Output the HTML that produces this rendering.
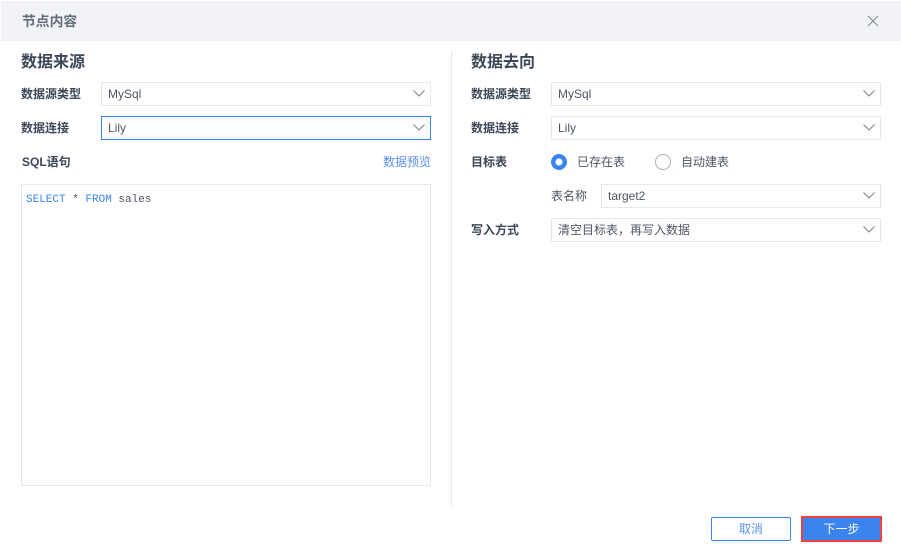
<!DOCTYPE html>
<html lang="zh"><head><meta charset="utf-8"><style>
html,body{margin:0;padding:0;width:901px;height:551px;overflow:hidden;background:#fff}
body{font-family:"Liberation Sans","Noto Sans CJK SC",sans-serif;position:relative;font-size:12px;color:#3d4757}
.a{position:absolute;white-space:nowrap}
.h{font-size:16px;font-weight:bold;line-height:22px;color:#3d4757}
.l{font-size:12px;font-weight:bold;line-height:18px;color:#3d4757}
.s{position:absolute;box-sizing:border-box;height:24px;border:1px solid #e8e8e8;background:#fff;line-height:22px;padding-left:6px;color:#4d5666;font-size:12px;white-space:nowrap}
.s svg{position:absolute;right:5px;top:7px}
</style></head><body>
<div class="a" style="left:1px;top:1px;width:900px;height:40px;background:#f2f3f7"></div>
<div class="a" style="left:22px;top:12px;line-height:20px;font-weight:bold;color:#666e7a;font-size:13.8px">节点内容</div>
<svg class="a" style="left:867px;top:15px" width="12" height="12" viewBox="0 0 12 12"><path d="M1 1L11 11M11 1L1 11" stroke="#7d8590" stroke-width="1" fill="none"/></svg>

<div class="a h" style="left:21px;top:52px">数据来源</div>
<div class="a l" style="left:21px;top:85px">数据源类型</div>
<div class="s" style="left:101px;top:82px;width:330px">MySql<svg width="12" height="7" viewBox="0 0 12 7"><path d="M0.5 0.5L6 6L11.5 0.5" stroke="#8a8078" fill="none"/></svg></div>
<div class="a l" style="left:21px;top:119px">数据连接</div>
<div class="s" style="left:101px;top:116px;width:330px;border-color:#3a84f0">Lily<svg width="12" height="7" viewBox="0 0 12 7"><path d="M0.5 0.5L6 6L11.5 0.5" stroke="#8a8078" fill="none"/></svg></div>
<div class="a l" style="left:22px;top:153px">SQL语句</div>
<div class="a" style="left:383px;top:153px;line-height:18px;color:#5b8ff0">数据预览</div>
<div class="a" style="left:21px;top:184px;width:410px;height:302px;box-sizing:border-box;border:1px solid #e8e8e8"></div>
<div class="a" style="left:26px;top:193px;font-family:'Liberation Mono',monospace;font-size:11px;line-height:15px;color:#4d5666"><span style="color:#3a84f0">SELECT</span> * <span style="color:#3a84f0">FROM</span> sales</div>

<div class="a" style="left:451px;top:51px;width:1px;height:455px;background:#e8e8e8"></div>

<div class="a h" style="left:471px;top:52px">数据去向</div>
<div class="a l" style="left:471px;top:85px">数据源类型</div>
<div class="s" style="left:551px;top:82px;width:330px">MySql<svg width="12" height="7" viewBox="0 0 12 7"><path d="M0.5 0.5L6 6L11.5 0.5" stroke="#8a8078" fill="none"/></svg></div>
<div class="a l" style="left:471px;top:119px">数据连接</div>
<div class="s" style="left:551px;top:116px;width:330px">Lily<svg width="12" height="7" viewBox="0 0 12 7"><path d="M0.5 0.5L6 6L11.5 0.5" stroke="#8a8078" fill="none"/></svg></div>
<div class="a l" style="left:471px;top:153px">目标表</div>
<svg class="a" style="left:551px;top:154px" width="16" height="16" viewBox="0 0 16 16"><circle cx="8" cy="8" r="8" fill="#3a84f0"/><circle cx="8" cy="8" r="3.5" fill="#fff"/></svg>
<div class="a" style="left:577px;top:153px;line-height:18px;color:#4d5666">已存在表</div>
<svg class="a" style="left:655px;top:154px" width="16" height="16" viewBox="0 0 16 16"><circle cx="8" cy="8" r="7.5" fill="#fff" stroke="#a9afba"/></svg>
<div class="a" style="left:681px;top:153px;line-height:18px;color:#4d5666">自动建表</div>
<div class="a" style="left:551px;top:187px;line-height:18px;color:#4d5666">表名称</div>
<div class="s" style="left:601px;top:184px;width:280px">target2<svg width="12" height="7" viewBox="0 0 12 7"><path d="M0.5 0.5L6 6L11.5 0.5" stroke="#8a8078" fill="none"/></svg></div>
<div class="a l" style="left:471px;top:221px">写入方式</div>
<div class="s" style="left:551px;top:218px;width:330px">清空目标表，再写入数据<svg width="12" height="7" viewBox="0 0 12 7"><path d="M0.5 0.5L6 6L11.5 0.5" stroke="#8a8078" fill="none"/></svg></div>

<div class="a" style="left:711px;top:517px;width:80px;height:24px;box-sizing:border-box;border:1px solid #3a84f0;border-radius:2px;text-align:center;line-height:22px;color:#5b8ff0">取消</div>
<div class="a" style="left:801px;top:516px;width:81px;height:26px;box-sizing:border-box;border:2px solid #f04040;background:#3a84f0;text-align:center;line-height:22px;color:#fff">下一步</div>
</body></html>
